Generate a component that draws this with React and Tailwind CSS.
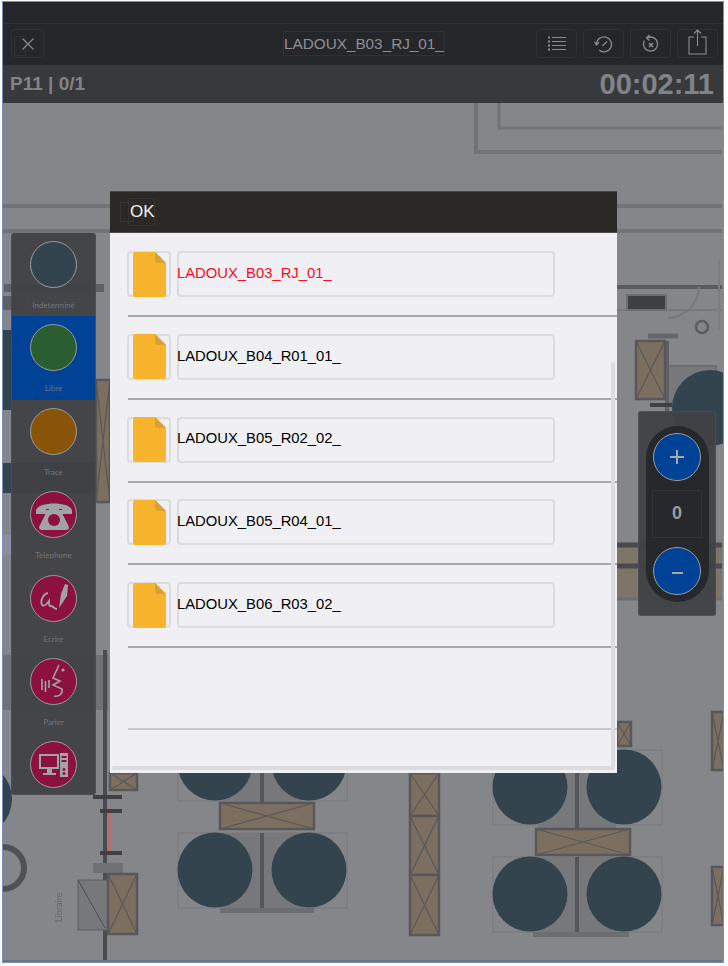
import React from "react";

const files = [
  { name: "LADOUX_B03_RJ_01_", active: true },
  { name: "LADOUX_B04_R01_01_" },
  { name: "LADOUX_B05_R02_02_" },
  { name: "LADOUX_B05_R04_01_" },
  { name: "LADOUX_B06_R03_02_" },
];

// plan drawing helpers
function Crate({ x, y, w, h }) {
  return (
    <g stroke="#58585a" fill="none">
      <rect x={x} y={y} width={w} height={h} fill="#7d6f60" strokeWidth="2.5" />
      <path d={`M${x} ${y}L${x + w} ${y + h}M${x + w} ${y}L${x} ${y + h}`} strokeWidth="1.2" />
    </g>
  );
}

function Desk({ cx, cy }) {
  return (
    <g>
      <rect x={cx - 37} y={cy - 37} width="169" height="75" fill="none" stroke="#77787b" />
      <rect x={cx + 8} y={cy - 37} width="78" height="79" fill="#77787b" />
      <rect x={cx + 45} y={cy - 37} width="4" height="79" fill="#555659" />
      <circle cx={cx} cy={cy} r="37.5" fill="#33444f" />
      <circle cx={cx + 94} cy={cy} r="37.5" fill="#33444f" />
    </g>
  );
}

function FloorPlan() {
  return (
    <svg className="absolute left-0 top-0 blur-[0.6px]" width="728" height="966" viewBox="0 0 728 966">
      <g fill="none" stroke="#727377" strokeWidth="4">
        <path d="M476 103V152H722" />
        <path d="M499 103V128H722" strokeWidth="3" />
        <path d="M2 206H110M2 231H110M617 206H722M617 231H722" />
        <path d="M3 961H722" strokeWidth="2" />
      </g>
      <rect x="4" y="284" width="100" height="8" fill="#5f6063" />
      <rect x="3" y="296" width="22" height="14" fill="#5f6063" />
      <rect x="3" y="330" width="9" height="80" fill="#33444f" />
      <rect x="3" y="463" width="100" height="30" fill="#33444f" />
      <rect x="3" y="535" width="90" height="20" fill="#8f8f9c" />
      <Crate x={96} y={380} w={14} h={122} />
      <rect x="3" y="655" width="105" height="55" fill="#707174" />
      <path d="M105 650V960" stroke="#4b4c4f" strokeWidth="4" />
      <path d="M109 808V856" stroke="#b46e6e" strokeWidth="4" />
      <path d="M100 811H122M100 853H122M93 797H122" stroke="#3f4042" strokeWidth="4" />
      <rect x="93" y="863" width="30" height="10" fill="#707174" />
      <rect x="78" y="880" width="30" height="50" fill="#77787b" stroke="#5e5f62" />
      <path d="M78 880L105 928" stroke="#4b4c4f" />
      <Crate x={108} y={874} w={29} h={60} />
      <Crate x={110} y={773} w={27} h={17} />
      <circle cx="-25" cy="799" r="37" fill="#33444f" />
      <path d="M3 847a21 21 0 0 1 0 42" fill="none" stroke="#505154" strokeWidth="6" />
      <text x="0" y="0" fontSize="9" fill="#68696c" transform="translate(62 922) rotate(-90)" fontFamily="Lato, sans-serif">Libraire</text>

      <Desk cx={215} cy={870} />
      <Desk cx={215} cy={763} />
      <Crate x={220} y={803} w={94} h={26} />
      <rect x="220" y="908" width="94" height="5" fill="#6d6e71" />

      <Crate x={410} y={773} w={29} h={43} />
      <Crate x={410} y={816} w={29} h={59} />
      <Crate x={410} y={875} w={29} h={60} />

      <Desk cx={530} cy={787} />
      <Desk cx={530} cy={894} />
      <Crate x={536} y={829} w={94} h={26} />
      <rect x="533" y="932" width="96" height="5" fill="#6d6e71" />

      <Crate x={617} y={722} w={14} h={24} />
      <Crate x={712} y={712} w={12} h={58} />
      <Crate x={712} y={867} w={12} h={58} />

      {/* right side, beside the popup */}
      <path d="M617 287H722" stroke="#5a5b5e" strokeWidth="4" />
      <path d="M617 310H722" stroke="#77787b" strokeWidth="2" />
      <rect x="627" y="295" width="39" height="15" fill="#3f4044" stroke="#6d6e71" strokeWidth="2" />
      <path d="M668 318a32 32 0 0 0 31-31" fill="none" stroke="#77787b" strokeWidth="2" />
      <path d="M719 260V330" stroke="#7c7d80" strokeWidth="2" />
      <rect x="668" y="366" width="48" height="40" fill="#77787b" stroke="#6d6e71" strokeWidth="2" />
      <circle cx="710" cy="408" r="38" fill="#33444f" />
      <rect x="665" y="341" width="4" height="70" fill="#5f6063" />
      <Crate x={636} y={341} w={29} h={58} />
      <path d="M648 336H678" stroke="#66676a" strokeWidth="5" />
      <path d="M650 405H672" stroke="#3f4042" strokeWidth="4" />
      <circle cx="702" cy="327" r="6" fill="none" stroke="#5c5d60" strokeWidth="2.5" />
      <rect x="617" y="543" width="105" height="57" fill="#7d7568" />
      <path d="M617 545H722M617 566H722" stroke="#4a4a4c" strokeWidth="5" />
      <path d="M617 599H722" stroke="#6d6e71" strokeWidth="3" />
    </svg>
  );
}

function Ghost({ className }) {
  return <span className={`absolute border border-white/5 ${className}`} />;
}

function ToolButton({ children }) {
  return (
    <div className="flex h-[29px] w-[41px] items-center justify-center rounded-sm border border-white/5 text-[#8b8c8f]">
      {children}
    </div>
  );
}

function TopBar() {
  return (
    <div className="relative h-[42px] shrink-0 border-t border-white/5 bg-[#25262a]">
      <div className="absolute left-[11px] top-[5px] flex h-[29px] w-[33px] items-center justify-center rounded-sm border border-white/5">
        <Ghost className="left-[2px] top-[6px] h-[20px] w-[12px]" />
        <svg width="14" height="14" viewBox="0 0 14 14" stroke="#8b8c8f" strokeWidth="1.1">
          <path d="M1.5 1.5L12.5 12.5M12.5 1.5L1.5 12.5" />
        </svg>
      </div>
      <div className="absolute left-[283px] top-[7px] flex h-[25px] items-center border border-white/5 text-[15.300px] leading-none text-[#8e8f91]">
        LADOUX_B03_RJ_01_
      </div>
      <div className="absolute left-[536px] top-[5px] flex gap-[6px]">
        <ToolButton>
          <svg width="20" height="18" viewBox="0 0 20 18" stroke="currentColor" fill="none" strokeWidth="1.2">
            <path d="M5 2.5H19M5 6.5H19M5 10.5H19M5 14.5H19" />
            <path d="M1 2.5H3M1 6.5H3M1 10.5H3M1 14.5H3" strokeWidth="2" />
          </svg>
        </ToolButton>
        <ToolButton>
          <svg width="19" height="18" viewBox="0 0 19 18" stroke="currentColor" fill="none" strokeWidth="1.3">
            <path d="M2.5 9a7.500 7.500 0 1 1 2.600 6" />
            <path d="M0.500 6.800L2.500 10L5 7.200" />
            <path d="M8.500 11L13 6.500" />
          </svg>
        </ToolButton>
        <ToolButton>
          <svg width="18" height="19" viewBox="0 0 18 19" stroke="currentColor" fill="none" strokeWidth="1.3">
            <path d="M5 4a7 7 0 1 1-2.500 2.500" />
            <path d="M7.500 1L4.500 4L7.500 6.500" />
            <path d="M7 9L11 13M11 9L7 13" strokeWidth="1.6" />
          </svg>
        </ToolButton>
        <ToolButton>
          <svg width="19" height="26" viewBox="0 0 19 26" stroke="currentColor" fill="none" strokeWidth="1.1" className="-mt-[4px]">
            <path d="M6 8H1V25H18V8H13" />
            <path d="M9.500 17V1M6 4.500L9.500 1L13 4.500" />
          </svg>
        </ToolButton>
      </div>
    </div>
  );
}

function StatusBar() {
  return (
    <div className="flex h-[38px] shrink-0 items-center justify-between bg-[#38393d] pl-[10px] pr-[14px]">
      <span className="text-[19px] font-bold text-[#828386]">P11 | 0/1</span>
      <span className="text-[29px] font-bold leading-none text-[#828386]">00:02:11</span>
    </div>
  );
}

function PhoneIcon() {
  return (
    <svg width="38" height="30" viewBox="0 0 38 30" fill="#a2a3a6">
      <path d="M1 11C1 1 37 1 37 11V14H27V9H11V14H1Z" />
      <path d="M11 10H14V8H24V10H27V13L34 27Q34 30 31 30H7Q4 30 4 27L11 13Z" />
      <circle cx="19" cy="20" r="6" fill="#8c1040" />
    </svg>
  );
}

function PenIcon() {
  return (
    <svg width="30" height="32" viewBox="0 0 30 32" fill="none" stroke="#a2a3a6" strokeWidth="1.8">
      <path d="M9 11C4 12 1 19 3 23C5 25 8 22 10 19C10 22 10 25 12 24C14 24 15 27 18 27" />
      <path d="M20 26L22 12L26 2L29 3L28 14Z" fill="#a2a3a6" stroke="none" />
    </svg>
  );
}

function SpeakIcon() {
  return (
    <svg width="26" height="34" viewBox="0 0 26 34" fill="none" stroke="#a2a3a6" strokeWidth="1.6">
      <path d="M18 1L12 14L19 17L12 21L21 25C22 30 18 33 13 32" />
      <circle cx="22" cy="6" r="1.6" fill="#a2a3a6" stroke="none" />
      <path d="M1 15V26M4.500 17V28M8 16V24" />
    </svg>
  );
}

function ComputerIcon() {
  return (
    <svg width="30" height="24" viewBox="0 0 30 24" fill="#a2a3a6">
      <path fillRule="evenodd" d="M0 1H20V16H13V20H17V22H4V20H8V16H0ZM2 3V14H18V3Z" />
      <path fillRule="evenodd" d="M21 0H29V24H21ZM22.500 3V5H27.500V3ZM22.500 7V9H27.500V7ZM25 15a1.500 1.500 0 1 0 .01 0ZM25 19a1.500 1.500 0 1 0 .01 0Z" />
    </svg>
  );
}

const tools = [
  { label: "Indeterminé", color: "bg-[#33444f]" },
  { label: "Libre", color: "bg-[#2a5e30]", selected: true },
  { label: "Trace", color: "bg-[#895407]" },
  { label: "Telephone", color: "bg-[#8c1040]", icon: <PhoneIcon /> },
  { label: "Ecrire", color: "bg-[#8c1040]", icon: <PenIcon /> },
  { label: "Parler", color: "bg-[#8c1040]", icon: <SpeakIcon /> },
  { label: "", color: "bg-[#8c1040]", icon: <ComputerIcon /> },
];

function ToolSidebar() {
  return (
    <div className="absolute left-[11px] top-[130px] h-[562px] w-[85px] overflow-hidden rounded-[3px] border-x border-b border-white/5 bg-[#404144]/95">
      {tools.map((tool) => (
        <div
          key={tool.label}
          className={`flex h-[83.400px] flex-col items-center pt-[8px] ${tool.selected ? "bg-[#004295]" : ""}`}
        >
          <div className={`flex h-[47px] w-[47px] items-center justify-center rounded-full border border-[#9a9b9e] ${tool.color}`}>
            {tool.icon}
          </div>
          <span className="mt-[12px] font-['Lato',sans-serif] text-[8px] leading-[10px] text-[#737477]">{tool.label}</span>
        </div>
      ))}
    </div>
  );
}

function FileRow({ file }) {
  return (
    <div className="h-[82.750px] pt-[18px]">
      <div className="flex h-[46px] items-stretch gap-[6px] pl-[17px]">
        <div className="flex w-[44px] items-center justify-center rounded-sm border-2 border-[#dcdce0]">
          <svg width="33" height="45" viewBox="0 0 33 45">
            <path d="M2 0H22L33 11V43Q33 45 31 45H2Q0 45 0 43V2Q0 0 2 0Z" fill="#f9b42d" />
            <path d="M22 0L33 11H25Q22 11 22 8Z" fill="#dba032" />
          </svg>
        </div>
        <div
          className={`flex w-[378px] items-center rounded-sm border-2 border-[#dcdce0] pb-[2px] text-[14.800px] ${
            file.active ? "text-[#fb0d1b]" : "text-black"
          }`}
        >
          <span className="-ml-[2px]">{file.name}</span>
        </div>
      </div>
      <div className="ml-[18px] mt-[18px] h-[2px] bg-[#a8a8ab]" />
    </div>
  );
}

function FilePopup() {
  return (
    <div className="absolute left-[110px] top-[88px] h-[582px] w-[507px] overflow-hidden bg-[#efeff4]">
      <div className="relative flex h-[42px] items-center border-y border-[#4b4a47] bg-[#2b2926] pl-[20px] text-[17px] text-[#f2f2f2]">
        <Ghost className="left-[10px] top-[10px] h-[20px] w-[14px]" />
        <Ghost className="left-[18px] top-[6px] h-[28px] w-[27px]" />
        OK
      </div>
      {files.map((file) => (
        <FileRow key={file.name} file={file} />
      ))}
      <div className="h-[82.750px]" />
      <div className="ml-[18px] -mt-[2px] h-[2px] bg-[#c8c8cb]" />
      {/* scroll bars */}
      <div className="absolute left-[501px] top-[171px] h-[408px] w-[4px] rounded-full bg-[#dcdce0]" />
      <div className="absolute bottom-[3px] left-[2px] h-[4px] w-[500px] rounded-full bg-[#dcdce0]" />
    </div>
  );
}

function ZoomPanel() {
  return (
    <div className="absolute left-[638px] top-[308px] flex h-[205px] w-[78px] items-center justify-center rounded-[3px] border border-white/5 bg-[#404144]/95">
      <div className="flex h-[176px] w-[63px] flex-col items-center justify-between rounded-full bg-[#27282c] py-[7px]">
        <div className="flex h-[48px] w-[48px] items-center justify-center rounded-full border border-[#9a9b9e] bg-[#004295]">
          <svg width="16" height="16" viewBox="0 0 16 16" stroke="#a7a8ab" strokeWidth="2">
            <path d="M8 1V15M1 8H15" />
          </svg>
        </div>
        <div className="flex h-[48px] w-[50px] items-center justify-center border border-white/5 text-[18px] font-bold text-[#9a9b9e]">
          0
        </div>
        <div className="flex h-[48px] w-[48px] items-center justify-center rounded-full border border-[#9a9b9e] bg-[#004295]">
          <div className="mt-[4px] h-[2px] w-[11px] bg-[#a7a8ab]" />
        </div>
      </div>
    </div>
  );
}

export default function App() {
  return (
    <div className="relative flex h-[966px] w-[728px] flex-col overflow-hidden bg-[#85868a] font-['Liberation_Sans',sans-serif]">
      <FloorPlan />
      <div className="relative flex flex-1 flex-col overflow-hidden pt-[2px]">
        <div className="h-[21px] shrink-0 bg-[#25262a]" />
        <TopBar />
        <StatusBar />
        <div className="relative flex-1">
          <ToolSidebar />
          <FilePopup />
          <ZoomPanel />
        </div>
      </div>
      {/* device frame */}
      <div className="pointer-events-none absolute bottom-[3px] left-[2px] right-[4px] top-[1px] border border-[#7391ba]" />
      <div className="pointer-events-none absolute bottom-0 right-0 h-full w-[4px] bg-white" />
      <div className="pointer-events-none absolute bottom-0 left-0 h-[3px] w-full bg-white" />
      <div className="pointer-events-none absolute left-0 top-0 h-full w-[2px] bg-white" />
      <div className="pointer-events-none absolute left-0 top-0 h-[1px] w-full bg-white" />
    </div>
  );
}
